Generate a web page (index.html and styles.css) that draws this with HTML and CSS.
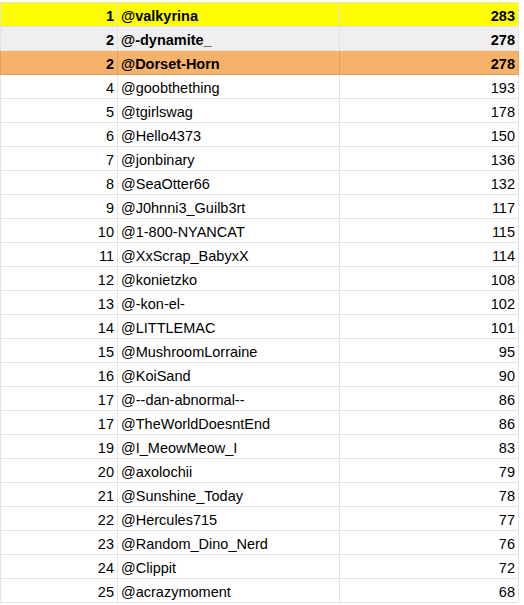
FILE: index.html
```html
<!DOCTYPE html>
<html>
<head>
<meta charset="utf-8">
<link rel="stylesheet" href="styles.css">
</head>
<body>
<table class="sheet">
<tbody>
<tr class="r-gold"><td class="rank">1</td><td class="name">@valkyrina</td><td class="score">283</td></tr>
<tr class="r-silver"><td class="rank">2</td><td class="name">@-dynamite_</td><td class="score">278</td></tr>
<tr class="r-bronze"><td class="rank">2</td><td class="name">@Dorset-Horn</td><td class="score">278</td></tr>
<tr><td class="rank">4</td><td class="name">@goobthething</td><td class="score">193</td></tr>
<tr><td class="rank">5</td><td class="name">@tgirlswag</td><td class="score">178</td></tr>
<tr><td class="rank">6</td><td class="name">@Hello4373</td><td class="score">150</td></tr>
<tr><td class="rank">7</td><td class="name">@jonbinary</td><td class="score">136</td></tr>
<tr><td class="rank">8</td><td class="name">@SeaOtter66</td><td class="score">132</td></tr>
<tr><td class="rank">9</td><td class="name">@J0hnni3_Guilb3rt</td><td class="score">117</td></tr>
<tr><td class="rank">10</td><td class="name">@1-800-NYANCAT</td><td class="score">115</td></tr>
<tr><td class="rank">11</td><td class="name">@XxScrap_BabyxX</td><td class="score">114</td></tr>
<tr><td class="rank">12</td><td class="name">@konietzko</td><td class="score">108</td></tr>
<tr><td class="rank">13</td><td class="name">@-kon-el-</td><td class="score">102</td></tr>
<tr><td class="rank">14</td><td class="name">@LITTLEMAC</td><td class="score">101</td></tr>
<tr><td class="rank">15</td><td class="name">@MushroomLorraine</td><td class="score">95</td></tr>
<tr><td class="rank">16</td><td class="name">@KoiSand</td><td class="score">90</td></tr>
<tr><td class="rank">17</td><td class="name">@--dan-abnormal--</td><td class="score">86</td></tr>
<tr><td class="rank">17</td><td class="name">@TheWorldDoesntEnd</td><td class="score">86</td></tr>
<tr><td class="rank">19</td><td class="name">@I_MeowMeow_I</td><td class="score">83</td></tr>
<tr><td class="rank">20</td><td class="name">@axolochii</td><td class="score">79</td></tr>
<tr><td class="rank">21</td><td class="name">@Sunshine_Today</td><td class="score">78</td></tr>
<tr><td class="rank">22</td><td class="name">@Hercules715</td><td class="score">77</td></tr>
<tr><td class="rank">23</td><td class="name">@Random_Dino_Nerd</td><td class="score">76</td></tr>
<tr><td class="rank">24</td><td class="name">@Clippit</td><td class="score">72</td></tr>
<tr><td class="rank">25</td><td class="name">@acrazymoment</td><td class="score">68</td></tr>
</tbody>
</table>
</body>
</html>
```
FILE: styles.css
```css
html, body {
  margin: 0;
  padding: 0;
  background: #ffffff;
}
body {
  padding-top: 2px;
  font-family: "Liberation Sans", Arial, sans-serif;
  font-size: 14.5px;
  color: #000000;
}
.sheet {
  border-collapse: collapse;
  table-layout: fixed;
  width: 519px;
}
.sheet td {
  height: 24px;
  padding: 3px 3px 0 3px;
  border: 1px solid #e2e3e3;
  white-space: nowrap;
  overflow: hidden;
  line-height: 20px;
  box-sizing: border-box;
  vertical-align: top;
}
.rank {
  width: 117px;
  text-align: right;
  padding-right: 4px;
}
.name {
  width: 222px;
  text-align: left;
}
.score {
  width: 179px;
  text-align: right;
}
.r-gold td {
  background: #ffff00;
  font-weight: bold;
}
.r-silver td {
  background: #efefef;
  font-weight: bold;
}
.r-bronze td {
  background: #f6b26b;
  font-weight: bold;
  border-color: #e0a15f;
}
```
